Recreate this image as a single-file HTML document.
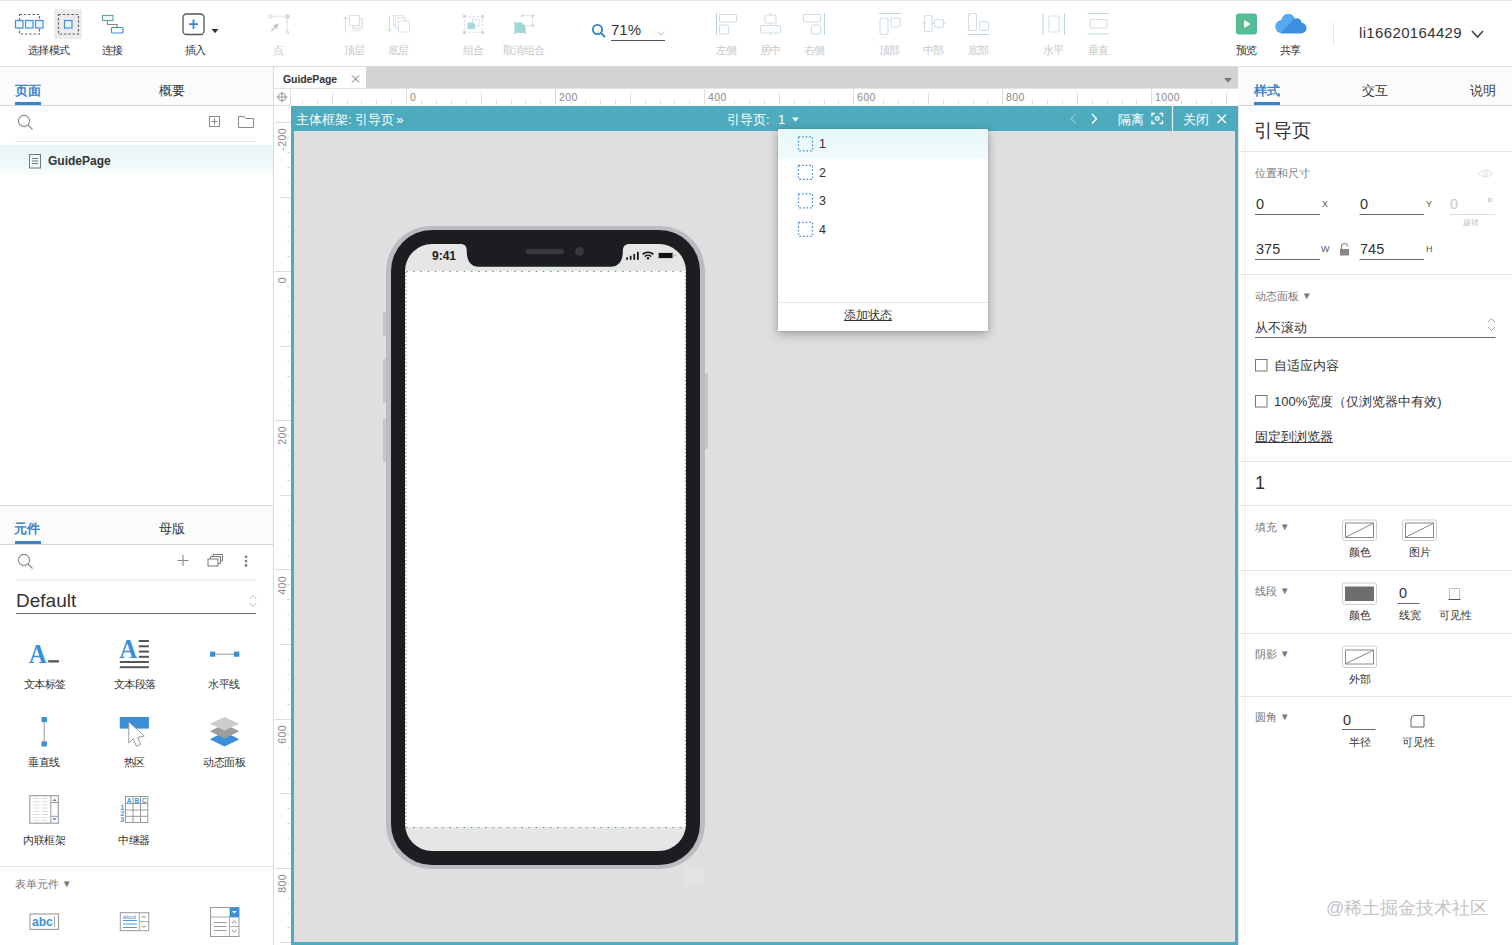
<!DOCTYPE html>
<html><head><meta charset="utf-8">
<style>
*{margin:0;padding:0;box-sizing:border-box}
html,body{width:1512px;height:945px;overflow:hidden;background:#fff;font-family:"Liberation Sans",sans-serif;color:#333}
.a{position:absolute}
.t{position:absolute;white-space:nowrap;line-height:1}
svg{position:absolute;overflow:visible}
.lbl{font-size:10.6px;color:#333;font-weight:500;letter-spacing:-0.6px}
.dis{color:#c8c8c8}
.rl{font-size:10.5px;color:#8a8a8a;letter-spacing:0.4px}
.fh{font-size:13px;color:#fff;font-weight:500}
.dd{font-size:12.5px;color:#333}
.hr{left:1238px;width:274px;height:1px;background:#e6e6e6}
.sl{font-size:10.5px;color:#777}
.fv{font-size:14.5px;color:#333}
.xs{font-size:9px;color:#555}
.rs{font-size:10.5px;color:#333}
.ws{font-size:10.5px;color:#333;font-weight:500;letter-spacing:-0.4px}
</style></head><body>
<!-- TOOLBAR -->
<div class="a" style="left:0;top:0;width:1512px;height:67px;background:#fff;border-top:1px solid #e6e6e6;border-bottom:1px solid #dcdcdc"></div>
<!-- select mode icons -->
<svg width="1512" height="66" style="left:0;top:0">
  <g fill="none" stroke-width="1.2">
    <rect x="19.5" y="14.5" width="20" height="19.5" stroke="#666" stroke-dasharray="2.5,1.8"/>
    <rect x="15.5" y="20.5" width="7.5" height="7.5" stroke="#3d8fe0" fill="#eef6fd"/>
    <rect x="25.5" y="20.5" width="7.5" height="7.5" stroke="#3d8fe0" fill="#eef6fd"/>
    <rect x="35.5" y="20.5" width="7.5" height="7.5" stroke="#3d8fe0" fill="#eef6fd"/>
  </g>
  <rect x="54" y="9" width="28" height="30" fill="#ececec"/>
  <g fill="none" stroke-width="1.2">
    <rect x="58.5" y="14.5" width="20" height="19.5" stroke="#666" stroke-dasharray="2.5,1.8"/>
    <rect x="64.5" y="20.5" width="7.5" height="7.5" stroke="#3d8fe0" fill="#eef6fd"/>
    <!-- connect -->
    <rect x="102.5" y="15.5" width="10.5" height="5" stroke="#5cb08a"/>
    <path d="M107.5 21 V24.5 H117 V27" stroke="#888"/>
    <rect x="111.5" y="27.5" width="11.5" height="5.5" rx="1" stroke="#3d8fe0"/>
    <!-- insert -->
    <rect x="183" y="14" width="21" height="20.5" rx="3.5" stroke="#555" stroke-width="1.3"/>
    <path d="M193.5 19.5 V29 M189 24.2 H198" stroke="#2f86d8" stroke-width="1.8"/>
  </g>
  <path d="M211.5 29 H218.5 L215 33.3 Z" fill="#333"/>
  <!-- point (disabled) -->
  <g fill="none" stroke="#e2e2e2" stroke-width="1.1">
    <path d="M271 16.3 H286.5 M287.3 17.5 V31"/>
    <rect x="268.5" y="15" width="3" height="3" fill="#fff"/>
    <rect x="286" y="15" width="3" height="3" fill="#bfdde6" stroke="#bfdde6"/>
    <circle cx="287.3" cy="32.5" r="1.4" fill="#fff" stroke="#dcdcdc"/>
  </g>
  <path d="M278.8 23.3 L272.8 25.3 L276.8 29.3 Z" fill="#c4c4c4"/>
  <path d="M275 27.3 L271.3 31" stroke="#c4c4c4" stroke-width="1.3"/>
  <!-- top layer -->
  <g fill="none" stroke-width="1.1">
    <path d="M345.5 17.5 V32.5 M343.3 19.5 L345.5 17 L347.7 19.5" stroke="#c9e6d8"/>
    <rect x="352.5" y="18.5" width="10" height="10" stroke="#e2e2e2" fill="#faf8f4"/>
    <rect x="349.5" y="15.5" width="10" height="10" stroke="#dcdfe8" fill="#fff"/>
    <path d="M351.5 30.5 H361" stroke="#e6e2dc"/>
  </g>
  <!-- bottom layer -->
  <g fill="none" stroke-width="1.1">
    <path d="M389.5 15.5 V31 M387.3 29 L389.5 31.5 L391.7 29" stroke="#c9e6d8"/>
    <rect x="393.5" y="15.5" width="10" height="10" stroke="#e2e2e2"/>
    <rect x="395.5" y="18" width="10" height="10" stroke="#e2e2e2" fill="#fff"/>
    <rect x="398.5" y="21" width="11" height="11" stroke="#d6e3f2" fill="#fff"/>
  </g>
  <!-- group -->
  <g fill="none" stroke-width="1.1">
    <rect x="464.5" y="16.5" width="18" height="16" stroke="#dadada" stroke-dasharray="2,2.2"/>
    <rect x="472.5" y="19.5" width="6.5" height="6.5" stroke="#dde2f0"/>
    <path d="M468 23 H473 L474.5 24.5 V28.5 H468 Z" fill="#a8d8d8" stroke="#a8d8d8"/>
  </g>
  <g fill="#d4d4d4"><rect x="463" y="15" width="3" height="3"/><rect x="481" y="15" width="3" height="3"/><rect x="463" y="31" width="3" height="3"/><rect x="481" y="31" width="3" height="3"/></g>
  <!-- ungroup -->
  <g fill="none" stroke-width="1.1">
    <path d="M522 15.5 H532.5 V25.5 H522 V23" stroke="#e2e4f0"/>
    <path d="M515 23 H521.5 L525 26.5 V32.5 H515 Z" fill="#a2d6d6" stroke="#a2d6d6"/>
  </g>
  <g fill="#d4d4d4"><rect x="521" y="14.5" width="2.4" height="2.4"/><rect x="531.5" y="14.5" width="2.4" height="2.4"/><rect x="531.5" y="24.5" width="2.4" height="2.4"/><rect x="514" y="22" width="2.4" height="2.4"/><rect x="514" y="31.5" width="2.4" height="2.4"/><rect x="524" y="31.5" width="2.4" height="2.4"/></g>
  <!-- zoom -->
  <g fill="none" stroke="#2f7fd0" stroke-width="1.8">
    <circle cx="597.5" cy="29.5" r="4.6"/>
    <path d="M601 33 L605 37"/>
  </g>
  <path d="M611 40.5 H665" stroke="#555" stroke-width="1"/>
  <path d="M657.5 32 L661 35 L664.5 32" fill="none" stroke="#bbb" stroke-width="1"/>
  <!-- align icons (disabled) -->
  <g fill="none" stroke-width="1.1">
    <path d="M716.5 13 V35" stroke="#b5dccd"/>
    <rect x="719.5" y="14.5" width="17" height="7.5" rx="1.5" stroke="#cfdee8"/>
    <rect x="719.5" y="25" width="9" height="9" rx="1.5" stroke="#cfdee8"/>
    <path d="M770.5 13 V35" stroke="#b5dccd"/>
    <rect x="765" y="15" width="11" height="8" rx="1.5" stroke="#cfdee8" fill="#fff"/>
    <rect x="760.5" y="25.5" width="20" height="7.5" rx="1.5" stroke="#cfdee8" fill="#fff"/>
    <path d="M824.5 13 V35" stroke="#b5dccd"/>
    <rect x="803.5" y="14.5" width="17" height="7.5" rx="1.5" stroke="#cfdee8"/>
    <rect x="811.5" y="25" width="9" height="9" rx="1.5" stroke="#cfdee8"/>
    <path d="M879 13.5 H901" stroke="#b5dccd"/>
    <rect x="880" y="18" width="8" height="16.5" rx="1.5" stroke="#cfdee8"/>
    <rect x="891" y="18" width="9" height="9" rx="1.5" stroke="#cfdee8"/>
    <path d="M923 23.5 H945" stroke="#b5dccd"/>
    <rect x="924.5" y="15.5" width="7.5" height="16" rx="1.5" stroke="#cfdee8" fill="#fff"/>
    <rect x="934.5" y="19.5" width="9" height="8" rx="1.5" stroke="#cfdee8" fill="#fff"/>
    <path d="M967.5 34.5 H989" stroke="#b5dccd"/>
    <rect x="968.5" y="13.5" width="8" height="17" rx="1.5" stroke="#cfdee8"/>
    <rect x="979.5" y="21.5" width="9" height="9" rx="1.5" stroke="#cfdee8"/>
    <path d="M1043 13.5 V35 M1064.5 13.5 V35" stroke="#b5dccd"/>
    <rect x="1049" y="16" width="10" height="16" rx="1.5" stroke="#cfdee8"/>
    <path d="M1087.5 13.5 H1109 M1087.5 34 H1109" stroke="#b5dccd"/>
    <rect x="1090" y="19.5" width="17" height="8.5" rx="1.5" stroke="#cfdee8"/>
  </g>
  <!-- preview -->
  <rect x="1236" y="13.5" width="21" height="21" rx="3" fill="#55bd96"/>
  <path d="M1244.2 20 L1250.5 24 L1244.2 28 Z" fill="#fff"/>
  <!-- cloud -->
  <defs><clipPath id="cdark"><path d="M1279 35 L1295.5 17 H1312 V35 Z"/></clipPath></defs>
  <g fill="#55aaf0"><circle cx="1281.8" cy="26.6" r="6.6"/><circle cx="1288.3" cy="20.6" r="6.9"/><circle cx="1297" cy="23.2" r="4.6"/><circle cx="1301.3" cy="28.2" r="5.1"/><rect x="1281.5" y="25" width="20" height="8.3"/></g>
  <g fill="#3d90de" clip-path="url(#cdark)"><circle cx="1281.8" cy="26.6" r="6.6"/><circle cx="1288.3" cy="20.6" r="6.9"/><circle cx="1297" cy="23.2" r="4.6"/><circle cx="1301.3" cy="28.2" r="5.1"/><rect x="1281.5" y="25" width="20" height="8.3"/></g>
  <path d="M1333.5 22 V45.5" stroke="#e6e6e6" stroke-width="1"/>
  <path d="M1472 31 L1477.5 37 L1483 31" fill="none" stroke="#444" stroke-width="1.6"/>
</svg>
<div class="t lbl" style="left:28px;top:45px">选择模式</div>
<div class="t lbl" style="left:102px;top:45px">连接</div>
<div class="t lbl" style="left:185px;top:45px">插入</div>
<div class="t lbl dis" style="left:273px;top:45px">点</div>
<div class="t lbl dis" style="left:344px;top:45px">顶层</div>
<div class="t lbl dis" style="left:388px;top:45px">底层</div>
<div class="t lbl dis" style="left:463px;top:45px">组合</div>
<div class="t lbl dis" style="left:503px;top:45px">取消组合</div>
<div class="t" style="left:611px;top:22px;font-size:15px;color:#333">71%</div>
<div class="t lbl dis" style="left:716px;top:45px">左侧</div>
<div class="t lbl dis" style="left:760px;top:45px">居中</div>
<div class="t lbl dis" style="left:804px;top:45px">右侧</div>
<div class="t lbl dis" style="left:879px;top:45px">顶部</div>
<div class="t lbl dis" style="left:923px;top:45px">中部</div>
<div class="t lbl dis" style="left:968px;top:45px">底部</div>
<div class="t lbl dis" style="left:1043px;top:45px">水平</div>
<div class="t lbl dis" style="left:1088px;top:45px">垂直</div>
<div class="t lbl" style="left:1236px;top:45px">预览</div>
<div class="t lbl" style="left:1280px;top:45px">共享</div>
<div class="t" style="left:1359px;top:25px;font-size:15px;color:#333;letter-spacing:0.35px">li16620164429</div>

<!-- LEFT PANEL -->
<div class="a" style="left:0;top:67px;width:274px;height:878px;background:#fff;border-right:1px solid #d8d8d8"></div>
<div class="a" style="left:0;top:67px;width:273px;height:39px;background:#fbfbfb;border-bottom:1px solid #d6d6d6"></div>
<div class="a" style="left:15px;top:102px;width:26px;height:3px;background:#3a82cf"></div>
<div class="t" style="left:14.5px;top:83.5px;font-size:13px;color:#3a82cf;font-weight:bold">页面</div>
<div class="t" style="left:159px;top:83.5px;font-size:13px;color:#333">概要</div>
<svg width="274" height="100" style="left:0;top:105px">
  <g fill="none" stroke="#888" stroke-width="1.1">
    <circle cx="24" cy="16" r="5.6"/>
    <path d="M28 20 L32.5 24.5"/>
  </g>
  <g fill="none" stroke="#888" stroke-width="1">
    <rect x="209.5" y="11.5" width="10" height="10"/>
    <path d="M214.5 13.5 V19.5 M211.5 16.5 H217.5"/>
    <path d="M238.5 11.5 H244 L245.5 13.5 H253.5 V22.5 H238.5 Z"/>
  </g>
  <path d="M15 36.5 H256" stroke="#e6e6e6" stroke-width="1"/>
</svg>
<div class="a" style="left:0;top:145px;width:273px;height:31px;background:linear-gradient(#e9f7f8 0%,#eef9f9 70%,#fbfefe 100%)"></div>
<svg width="20" height="20" style="left:27px;top:153px">
  <g fill="none" stroke="#777" stroke-width="1">
    <rect x="2.5" y="1.5" width="11" height="13.5"/>
    <path d="M5 5.5 H11 M5 8 H11 M5 10.5 H11"/>
  </g>
</svg>
<div class="t" style="left:48px;top:155px;font-size:12px;color:#333;font-weight:bold">GuidePage</div>

<!-- left bottom section -->
<div class="a" style="left:0;top:505px;width:273px;height:1px;background:#dcdcdc"></div>
<div class="a" style="left:0;top:506px;width:273px;height:39px;background:#fbfbfb;border-bottom:1px solid #d6d6d6"></div>
<div class="a" style="left:15px;top:541px;width:26px;height:3px;background:#3a82cf"></div>
<div class="t" style="left:14px;top:522px;font-size:13px;color:#3a82cf;font-weight:bold">元件</div>
<div class="t" style="left:159px;top:522px;font-size:13px;color:#333">母版</div>
<svg width="274" height="80" style="left:0;top:545px">
  <g fill="none" stroke="#888" stroke-width="1.1">
    <circle cx="24" cy="15" r="5.6"/>
    <path d="M28 19 L32.5 23.5"/>
  </g>
  <path d="M183 10 V21 M177.5 15.5 H188.5" stroke="#888" stroke-width="1.1"/>
  <g fill="none" stroke="#777" stroke-width="1">
    <rect x="208" y="14" width="10" height="7"/>
    <path d="M210.5 14 V11.5 H220.5 V18.5 H218 M213 11.5 V9.5 H222.5 V16 H220.5"/>
  </g>
  <g fill="#777"><circle cx="246" cy="11.8" r="1.3"/><circle cx="246" cy="16.1" r="1.3"/><circle cx="246" cy="20.4" r="1.3"/></g>
  <path d="M16 35 H256" stroke="#e8e8e8" stroke-width="1"/>
  <path d="M16 68.5 H256" stroke="#666" stroke-width="1"/>
  <path d="M249.5 54 L253 50.5 L256.5 54 M249.5 58 L253 61.5 L256.5 58" fill="none" stroke="#bbb" stroke-width="1"/>
</svg>
<div class="t" style="left:16px;top:591px;font-size:19px;color:#333">Default</div>
<!-- widgets -->
<svg width="274" height="945" style="left:0;top:0">
  <text transform="translate(28.8 662.6) scale(1.04 1.14)" font-family="Liberation Serif" font-weight="bold" font-size="24" fill="#3b8fd8">A</text>
  <rect x="48.2" y="660.2" width="10.7" height="2.3" fill="#555"/>
  <text transform="translate(119.3 657.8) scale(1.04 1.14)" font-family="Liberation Serif" font-weight="bold" font-size="24" fill="#3b8fd8">A</text>
  <g fill="#555">
    <rect x="138.8" y="640" width="10.1" height="2"/>
    <rect x="138.8" y="645.3" width="10.1" height="2"/>
    <rect x="138.8" y="650.6" width="10.1" height="2"/>
    <rect x="138.8" y="655.8" width="10.1" height="2"/>
    <rect x="119.8" y="661" width="29.1" height="2"/>
    <rect x="119.8" y="666.2" width="29.1" height="2"/>
  </g>
  <path d="M212 654.2 H237" stroke="#aaa" stroke-width="1.2"/>
  <rect x="210" y="651.6" width="5.2" height="5.1" fill="#3b8fd8"/>
  <rect x="234" y="651.6" width="5.3" height="5.1" fill="#3b8fd8"/>
  <path d="M44.2 720 V744" stroke="#aaa" stroke-width="1.2"/>
  <rect x="41.5" y="717" width="5.4" height="5.1" fill="#3b8fd8"/>
  <rect x="41.5" y="741.3" width="5.4" height="5.2" fill="#3b8fd8"/>
  <rect x="119.8" y="717" width="29.1" height="11.6" fill="#3b8fd8"/>
  <path d="M128.8 722 V743 L133.4 738.8 L136.4 746.2 L140.6 744.4 L137.8 737.4 L144.3 736 Z" fill="#fff" stroke="#999" stroke-width="1" stroke-linejoin="round"/>
  <path d="M224.5 732 L239.3 739.2 L224.5 746.4 L209.8 739.2 Z" fill="#3b8fd8"/>
  <path d="M224.5 724 L239.3 731.2 L224.5 738.4 L209.8 731.2 Z" fill="#9d9d9d"/>
  <path d="M224.5 717 L239.3 723.8 L224.5 730.6 L209.8 723.8 Z" fill="#cdcdcd"/>
  <!-- inline frame -->
  <rect x="29.8" y="795.7" width="28.5" height="27.5" fill="#fff" stroke="#999" stroke-width="1.1"/>
  <path d="M50.8 796 V823 M50.8 802.5 H58 M50.8 816.3 H58" stroke="#999" stroke-width="1"/>
  <path d="M52.5 801 L54.5 798.8 L56.5 801 Z M52.5 818.3 L54.5 820.5 L56.5 818.3 Z" fill="#3b7fc8"/>
  <g stroke="#d6d6d6" stroke-width="0.9">
    <path d="M33.5 798.5 H39.5 M42 798.5 H47.5 M33.5 801.7 H39.5 M42 801.7 H47.5 M33.5 804.9 H39.5 M42 804.9 H47.5 M33.5 808.1 H39.5 M42 808.1 H47.5 M33.5 811.3 H39.5 M42 811.3 H47.5 M33.5 814.5 H39.5 M42 814.5 H47.5 M33.5 817.7 H39.5 M42 817.7 H47.5 M33.5 820.6 H39.5 M42 820.6 H47.5"/>
  </g>
  <!-- repeater -->
  <g fill="none" stroke="#999" stroke-width="1">
    <rect x="125.5" y="796.5" width="22.3" height="26"/>
    <path d="M133 796.5 V822.5 M140.5 796.5 V822.5 M125.5 803.5 H147.8 M125.5 810 H147.8 M125.5 816.3 H147.8"/>
  </g>
  <g font-family="Liberation Sans" font-weight="bold" font-size="6.5" fill="#3b8fd8">
    <text x="126.8" y="802.5">A</text><text x="134.4" y="802.5">B</text><text x="141.8" y="802.5">C</text>
    <text x="120.5" y="809.5">1</text><text x="120.5" y="815.8">2</text><text x="120.5" y="822">3</text>
  </g>
  <!-- form widgets -->
  <rect x="30" y="914" width="28.5" height="15.4" fill="#fff" stroke="#999" stroke-width="1.1"/>
  <text x="32" y="926.3" font-family="Liberation Sans" font-weight="bold" font-size="12" fill="#3b8fd8">abc</text>
  <path d="M54.5 916.5 V927" stroke="#aaa" stroke-width="1.2"/>
  <rect x="120.3" y="912.7" width="28.4" height="18" fill="#fff" stroke="#999" stroke-width="1"/>
  <path d="M139.3 913 V930.6 M139.3 921.7 H148.5" stroke="#aaa" stroke-width="1"/>
  <path d="M141.8 918 L143.8 916 L145.8 918 M141.8 925.5 L143.8 927.5 L145.8 925.5" fill="none" stroke="#777" stroke-width="0.9"/>
  <text x="122.8" y="918.7" font-family="Liberation Sans" font-size="6" fill="#3b8fd8">abcd</text>
  <path d="M123 920.5 H137 M123 924 H137 M123 927.5 H137" stroke="#3b8fd8" stroke-width="0.9"/>
  <rect x="210.5" y="907.5" width="28.5" height="29" fill="#fff" stroke="#999" stroke-width="1"/>
  <path d="M210.5 917 H239 M229.5 917 V936.5 M229.5 926.5 H239" stroke="#aaa" stroke-width="1"/>
  <rect x="229.6" y="907.5" width="9.4" height="9.5" fill="#3b8fd8"/>
  <path d="M232 911 L234.3 913.6 L236.6 911 Z" fill="#fff"/>
  <path d="M232 923 L234.3 920.8 L236.6 923 M232 930 L234.3 932.2 L236.6 930" fill="none" stroke="#777" stroke-width="0.9"/>
  <path d="M214 922.5 H226.5 M214 926.5 H226.5 M214 930.5 H226.5" stroke="#999" stroke-width="1"/>
</svg>
<div class="t ws" style="left:23.5px;top:679px">文本标签</div>
<div class="t ws" style="left:113.5px;top:679px">文本段落</div>
<div class="t ws" style="left:208px;top:679px">水平线</div>
<div class="t ws" style="left:28px;top:757px">垂直线</div>
<div class="t ws" style="left:123.5px;top:757px">热区</div>
<div class="t ws" style="left:203px;top:757px">动态面板</div>
<div class="t ws" style="left:23px;top:835px">内联框架</div>
<div class="t ws" style="left:118px;top:835px">中继器</div>
<div class="a" style="left:0;top:866px;width:273px;height:1px;background:#e6e6e6"></div>
<div class="t" style="left:15px;top:879px;font-size:10.5px;color:#777">表单元件 <span style="font-size:9.5px;vertical-align:1px">▼</span></div>

<!-- CANVAS -->
<div class="a" style="left:274px;top:67px;width:964px;height:22px;background:#d3d3d3"></div>
<div class="a" style="left:274px;top:67px;width:92px;height:21px;background:#fff"></div>
<div class="t" style="left:283px;top:74px;font-size:10.5px;font-weight:bold;color:#333;letter-spacing:-0.1px">GuidePage</div>
<svg width="1512" height="945" style="left:0;top:0">
  <path d="M352 75.5 L359 82.5 M359 75.5 L352 82.5" stroke="#666" stroke-width="1"/>
  <path d="M1224 78 H1232 L1228 82.5 Z" fill="#777"/>
</svg>
<div class="a" style="left:274px;top:88px;width:964px;height:18px;background:#fff;border-top:1px solid #e4e4e4"></div>
<div class="a" style="left:274px;top:106px;width:17px;height:839px;background:#fff"></div>
<svg width="1512" height="945" style="left:0;top:0">
  <path d="M290.5 89 V106 M274 105.5 H291" stroke="#dcdcdc" stroke-width="1"/>
  <g fill="none" stroke="#999" stroke-width="1">
    <circle cx="282" cy="97" r="3.8"/>
    <path d="M282 91.5 V102.5 M276.5 97 H287.5"/>
  </g>
  <path d="M302.5 100.5 V105 M317.5 100.5 V105 M332.5 93 V105 M347.5 100.5 V105 M361.5 100.5 V105 M376.5 100.5 V105 M391.5 100.5 V105 M406.5 89 V105 M421.5 100.5 V105 M436.5 100.5 V105 M451.5 100.5 V105 M466.5 100.5 V105 M481.5 93 V105 M496.5 100.5 V105 M511.5 100.5 V105 M525.5 100.5 V105 M540.5 100.5 V105 M555.5 89 V105 M570.5 100.5 V105 M585.5 100.5 V105 M600.5 100.5 V105 M615.5 100.5 V105 M630.5 93 V105 M645.5 100.5 V105 M660.5 100.5 V105 M674.5 100.5 V105 M689.5 100.5 V105 M704.5 89 V105 M719.5 100.5 V105 M734.5 100.5 V105 M749.5 100.5 V105 M764.5 100.5 V105 M779.5 93 V105 M794.5 100.5 V105 M809.5 100.5 V105 M824.5 100.5 V105 M838.5 100.5 V105 M853.5 89 V105 M868.5 100.5 V105 M883.5 100.5 V105 M898.5 100.5 V105 M913.5 100.5 V105 M928.5 93 V105 M943.5 100.5 V105 M958.5 100.5 V105 M973.5 100.5 V105 M987.5 100.5 V105 M1002.5 89 V105 M1017.5 100.5 V105 M1032.5 100.5 V105 M1047.5 100.5 V105 M1062.5 100.5 V105 M1077.5 93 V105 M1092.5 100.5 V105 M1107.5 100.5 V105 M1122.5 100.5 V105 M1136.5 100.5 V105 M1151.5 89 V105 M1166.5 100.5 V105 M1181.5 100.5 V105 M1196.5 100.5 V105 M1211.5 100.5 V105 M1226.5 93 V105" stroke="#dcdcdc" stroke-width="1"/>
  <path d="M287 107.5 H290 M275 122.5 H291 M287 137.5 H290 M287 152.5 H290 M287 167.5 H290 M287 182.5 H290 M280 197.5 H291 M287 211.5 H290 M287 226.5 H290 M287 241.5 H290 M287 256.5 H290 M275 271.5 H291 M287 286.5 H290 M287 301.5 H290 M287 316.5 H290 M287 331.5 H290 M280 346.5 H291 M287 361.5 H290 M287 376.5 H290 M287 390.5 H290 M287 405.5 H290 M275 420.5 H291 M287 435.5 H290 M287 450.5 H290 M287 465.5 H290 M287 480.5 H290 M280 495.5 H291 M287 510.5 H290 M287 525.5 H290 M287 540.5 H290 M287 555.5 H290 M275 569.5 H291 M287 584.5 H290 M287 599.5 H290 M287 614.5 H290 M287 629.5 H290 M280 644.5 H291 M287 659.5 H290 M287 674.5 H290 M287 689.5 H290 M287 704.5 H290 M275 719.5 H291 M287 734.5 H290 M287 748.5 H290 M287 763.5 H290 M287 778.5 H290 M280 793.5 H291 M287 808.5 H290 M287 823.5 H290 M287 838.5 H290 M287 853.5 H290 M275 868.5 H291 M287 883.5 H290 M287 898.5 H290 M287 913.5 H290 M287 927.5 H290 M280 942.5 H291" stroke="#dcdcdc" stroke-width="1"/>
</svg>


<div class="t rl" style="left:410px;top:92px">0</div><div class="t rl" style="left:559px;top:92px">200</div><div class="t rl" style="left:708px;top:92px">400</div><div class="t rl" style="left:857px;top:92px">600</div><div class="t rl" style="left:1006px;top:92px">800</div><div class="t rl" style="left:1155px;top:92px">1000</div>
<div class="t rl" style="left:277px;top:127.9px;transform-origin:0 0;transform:rotate(-90deg) translate(-100%,0);"><span>-200</span></div><div class="t rl" style="left:277px;top:277.1px;transform-origin:0 0;transform:rotate(-90deg) translate(-100%,0);"><span>0</span></div><div class="t rl" style="left:277px;top:426.3px;transform-origin:0 0;transform:rotate(-90deg) translate(-100%,0);"><span>200</span></div><div class="t rl" style="left:277px;top:575.5px;transform-origin:0 0;transform:rotate(-90deg) translate(-100%,0);"><span>400</span></div><div class="t rl" style="left:277px;top:724.6px;transform-origin:0 0;transform:rotate(-90deg) translate(-100%,0);"><span>600</span></div><div class="t rl" style="left:277px;top:873.8px;transform-origin:0 0;transform:rotate(-90deg) translate(-100%,0);"><span>800</span></div>
<!-- frame -->
<div class="a" style="left:291px;top:106px;width:947px;height:839px;background:#4eabbd"></div>
<div class="a" style="left:294px;top:130.5px;width:941px;height:811px;background:#dfdfdf"></div>
<div class="t fh" style="left:296px;top:113px">主体框架: 引导页<span style="margin-left:2px">»</span></div>
<div class="t fh" style="left:727px;top:113px">引导页:</div><div class="t fh" style="left:778px;top:113px">1</div>
<div class="t fh" style="left:1118px;top:113px">隔离</div>
<div class="t fh" style="left:1183px;top:113px">关闭</div>
<svg width="1512" height="945" style="left:0;top:0">
  <path d="M792 117.5 H799 L795.5 121.5 Z" fill="#fff"/>
  <path d="M1075.5 114 L1071 118.7 L1075.5 123.4" fill="none" stroke="#8cc6d2" stroke-width="1.2"/>
  <path d="M1092 114 L1096.5 118.7 L1092 123.4" fill="none" stroke="#fff" stroke-width="1.4"/>
  <g fill="none" stroke="#fff" stroke-width="1.3">
    <path d="M1152 116.5 V113.5 H1155 M1159.5 113.5 H1162.5 V116.5 M1162.5 120.5 V123.5 H1159.5 M1155 123.5 H1152 V120.5"/>
    <circle cx="1157.3" cy="118.5" r="1.8"/>
  </g>
  <path d="M1172.5 106 V131" stroke="#e8f4f6" stroke-width="1.2"/>
  <path d="M1217.5 114.5 L1226 123 M1226 114.5 L1217.5 123" stroke="#fff" stroke-width="1.4"/>
</svg>
<!-- PHONE -->
<div class="a" style="left:383px;top:311.5px;width:4px;height:24.5px;background:#c3c5c9;border-radius:1px"></div>
<div class="a" style="left:383px;top:359px;width:4px;height:44px;background:#c3c5c9;border-radius:1px"></div>
<div class="a" style="left:383px;top:418.5px;width:4px;height:43.5px;background:#c3c5c9;border-radius:1px"></div>
<div class="a" style="left:703px;top:373px;width:4.5px;height:75.5px;background:#c3c5c9;border-radius:1px"></div>
<div class="a" style="left:684px;top:866px;width:21px;height:20px;background:#e3e3e3"></div>
<div class="a" style="left:385.5px;top:225.5px;width:319px;height:643px;background:#babcc1;border-radius:45px"></div>
<div class="a" style="left:390.5px;top:229.5px;width:309.5px;height:635px;background:#1c1d20;border-radius:41px"></div>
<div class="a" style="left:405px;top:244px;width:281px;height:606.5px;background:#e6e6e6;border-radius:27px;overflow:hidden">
  <div class="a" style="left:0;top:27px;width:281px;height:556px;background:#fff"></div>
</div>
<svg width="1512" height="945" style="left:0;top:0">
  <path d="M460 244 C465 244 466.8 246 466.8 252 C466.8 261 471 266.8 479 266.8 H610.5 C618.5 266.8 622.8 261 622.8 252 C622.8 246 625 244 630 244 Z" fill="#1c1d20"/>
  <rect x="525.5" y="249" width="38.5" height="5" rx="2.5" fill="#38393d"/>
  <circle cx="579.5" cy="251.3" r="4.4" fill="#38393d"/>
  <g fill="#111">
    <rect x="626.2" y="257.3" width="1.7" height="2.5"/>
    <rect x="629.8" y="255.8" width="1.7" height="4"/>
    <rect x="633.4" y="254" width="1.7" height="5.8"/>
    <rect x="637" y="251.8" width="1.7" height="8"/>
    <circle cx="648" cy="258.2" r="1.2"/>
    <rect x="658.6" y="253" width="14" height="5" />
    <rect x="674.6" y="254.6" width="0.9" height="1.8" fill="#888"/>
  </g>
  <g fill="none" stroke="#111" stroke-width="1.5">
    <path d="M642.6 254.4 A7.6 7.6 0 0 1 653.4 254.4"/>
    <path d="M644.9 256.6 A4.4 4.4 0 0 1 651.1 256.6"/>
  </g>
  <rect x="658" y="252.4" width="15.2" height="6.2" fill="none" stroke="#c8c8c8" stroke-width="0.7"/>
  <g fill="none" stroke="#5a9d96" stroke-width="1.2" stroke-dasharray="1.6,5.6">
    <path d="M406 271.5 H685.5"/>
    <path d="M406 827.5 H685.5"/>
  </g>
  <g fill="none" stroke="#777" stroke-width="1" stroke-dasharray="1.4,2.2">
    <path d="M405.8 272 V827"/>
    <path d="M685.3 272 V827" stroke="#4aa9a4"/>
  </g>
</svg>
<div class="t" style="left:432px;top:250px;font-size:12px;font-weight:bold;color:#222">9:41</div>

<!-- DROPDOWN -->
<div class="a" style="left:778px;top:129px;width:210px;height:202px;background:#fff;box-shadow:0 0 0 0.5px rgba(0,0,0,0.12),0 3px 10px rgba(0,0,0,0.3)"></div>
<div class="a" style="left:778px;top:129px;width:210px;height:30px;background:linear-gradient(#e7f8f9,#f2fbfb)"></div>
<div class="a" style="left:778px;top:302px;width:210px;height:1px;background:#e8e8e8"></div>
<svg width="1512" height="945" style="left:0;top:0">
  <g fill="none" stroke="#3f86d6" stroke-width="1.2" stroke-dasharray="1.6,2">
    <rect x="798.5" y="136.8" width="14" height="14"/>
    <rect x="798.5" y="165.3" width="14" height="14"/>
    <rect x="798.5" y="193.8" width="14" height="14"/>
    <rect x="798.5" y="222.3" width="14" height="14"/>
  </g>
</svg>
<div class="t dd" style="left:819px;top:138px">1</div>
<div class="t dd" style="left:819px;top:166.5px">2</div>
<div class="t dd" style="left:819px;top:195px">3</div>
<div class="t dd" style="left:819px;top:223.5px">4</div>
<div class="t" style="left:844px;top:309px;font-size:12px;color:#333;text-decoration:underline">添加状态</div>

<!-- RIGHT PANEL -->
<div class="a" style="left:1238px;top:67px;width:274px;height:878px;background:#fff;border-left:1px solid #e4e4e4"></div>
<div class="a" style="left:1238px;top:67px;width:274px;height:39px;background:#fbfbfb;border-bottom:1px solid #d6d6d6"></div>
<div class="a" style="left:1254px;top:102px;width:26px;height:3px;background:#3a82cf"></div>
<div class="t" style="left:1253.5px;top:83.5px;font-size:13px;color:#3a82cf;font-weight:bold">样式</div>
<div class="t" style="left:1362px;top:83.5px;font-size:13px;color:#333">交互</div>
<div class="t" style="left:1470px;top:83.5px;font-size:13px;color:#333">说明</div>
<div class="t" style="left:1254px;top:121px;font-size:19px;color:#333">引导页</div>
<div class="a hr" style="top:151px"></div>
<div class="t sl" style="left:1255px;top:168px">位置和尺寸</div>
<div class="t fv" style="left:1256px;top:197px">0</div>
<div class="t fv" style="left:1360px;top:197px">0</div>
<div class="t fv" style="left:1450px;top:197px;color:#ccc">0</div>
<div class="t fv" style="left:1256px;top:242px">375</div>
<div class="t fv" style="left:1360px;top:242px">745</div>
<div class="t xs" style="left:1322px;top:200px">X</div>
<div class="t xs" style="left:1426px;top:200px">Y</div>
<div class="t xs" style="left:1321px;top:245px">W</div>
<div class="t xs" style="left:1426px;top:245px">H</div>
<div class="t" style="left:1463px;top:219px;font-size:8px;color:#bbb">旋转</div>
<svg width="274" height="878" style="left:1238px;top:67px">
  <g stroke-width="1" fill="none">
    <path d="M17 147.5 H82 M121.5 147.5 H186 M212 147.5 H257" stroke="#666"/>
    <path d="M212 147.5 H257" stroke="#ddd"/>
    <path d="M17 192.5 H82 M121.5 192.5 H186" stroke="#666"/>
    <circle cx="252" cy="133" r="1.8" stroke="#bbb"/>
    <path d="M240.5 106.5 Q247.5 99.5 254.5 106.5 Q247.5 113.5 240.5 106.5 Z" stroke="#ddd"/>
    <circle cx="247.5" cy="106.5" r="2" stroke="#ddd"/>
  </g>
  <rect x="102" y="182" width="9" height="6.5" fill="#888"/>
  <path d="M103.5 182 V179.5 A3 3 0 0 1 109.5 179.5" fill="none" stroke="#888" stroke-width="1.2"/>
</svg>
<div class="a hr" style="top:274px"></div>
<div class="t sl" style="left:1255px;top:291px">动态面板 <span style="font-size:9.5px;vertical-align:1px">▼</span></div>
<div class="t" style="left:1255px;top:321px;font-size:13px;color:#333">从不滚动</div>
<svg width="274" height="878" style="left:1238px;top:67px">
  <path d="M17 270.5 H257.5" stroke="#666" stroke-width="1"/>
  <path d="M250 255 L253.5 251.5 L257 255 M250 260 L253.5 263.5 L257 260" fill="none" stroke="#aaa" stroke-width="1"/>
  <rect x="17.5" y="292.5" width="11.5" height="11.5" fill="none" stroke="#777" stroke-width="1"/>
  <rect x="17.5" y="328.5" width="11.5" height="11.5" fill="none" stroke="#777" stroke-width="1"/>
</svg>
<div class="t" style="left:1274px;top:359px;font-size:13px;color:#333">自适应内容</div>
<div class="t" style="left:1274px;top:395px;font-size:13px;color:#333">100%宽度（仅浏览器中有效)</div>
<div class="t" style="left:1255px;top:430px;font-size:13px;color:#333;text-decoration:underline">固定到浏览器</div>
<div class="a hr" style="top:461px"></div>
<div class="t" style="left:1255px;top:474px;font-size:18px;color:#333">1</div>
<div class="a hr" style="top:505px"></div>
<div class="t sl" style="left:1255px;top:522px">填充 <span style="font-size:9.5px;vertical-align:1px">▼</span></div>
<div class="a hr" style="top:570px"></div>
<div class="t sl" style="left:1255px;top:586px">线段 <span style="font-size:9.5px;vertical-align:1px">▼</span></div>
<div class="a hr" style="top:633px"></div>
<div class="t sl" style="left:1255px;top:649px">阴影 <span style="font-size:9.5px;vertical-align:1px">▼</span></div>
<div class="a hr" style="top:696px"></div>
<div class="t sl" style="left:1255px;top:712px">圆角 <span style="font-size:9.5px;vertical-align:1px">▼</span></div>
<svg width="274" height="878" style="left:1238px;top:67px">
  <g fill="#fff" stroke="#cfcfcf" stroke-width="1">
    <rect x="104.5" y="453" width="34" height="20.5" rx="2"/>
    <rect x="164.5" y="453" width="34" height="20.5" rx="2"/>
    <rect x="104.5" y="516" width="34" height="21.5" rx="2"/>
    <rect x="104.5" y="579" width="34" height="21.5" rx="2"/>
  </g>
  <g fill="#fff" stroke="#888" stroke-width="1">
    <rect x="107.5" y="456" width="28" height="14.5"/>
    <rect x="167.5" y="456" width="28" height="14.5"/>
    <rect x="107.5" y="583" width="28" height="14"/>
  </g>
  <rect x="107" y="519.5" width="29" height="14.5" fill="#6e6e6e"/>
  <g stroke="#888" stroke-width="1">
    <path d="M108 470 L135 456.5 M168 470 L195 456.5 M108 596.5 L135 583.5"/>
  </g>
  <path d="M159.5 536.5 H181.5 M104 662.5 H137.5" stroke="#666" stroke-width="1"/>
  <g fill="none" stroke="#888" stroke-width="1">
    <path d="M211.5 531.5 V521.5 H221.5 V531.5" stroke-dasharray="1.2,1.2"/>
    <path d="M210.5 532.5 H222.5" stroke="#555"/>
    <path d="M173 660 V652 Q173 648.5 176.5 648.5 H186 V660 Z" stroke="#666"/>
  </g>
</svg>
<div class="t fv" style="left:1399px;top:586px">0</div>
<div class="t fv" style="left:1343px;top:713px">0</div>
<div class="t rs" style="left:1349px;top:547px">颜色</div>
<div class="t rs" style="left:1409px;top:547px">图片</div>
<div class="t rs" style="left:1349px;top:610px">颜色</div>
<div class="t rs" style="left:1399px;top:610px">线宽</div>
<div class="t rs" style="left:1439px;top:610px">可见性</div>
<div class="t rs" style="left:1349px;top:674px">外部</div>
<div class="t rs" style="left:1349px;top:737px">半径</div>
<div class="t rs" style="left:1402px;top:737px">可见性</div>
<div class="t" style="left:1326px;top:899px;font-size:18px;color:#c4c4c4">@稀土掘金技术社区</div>
</body></html>
